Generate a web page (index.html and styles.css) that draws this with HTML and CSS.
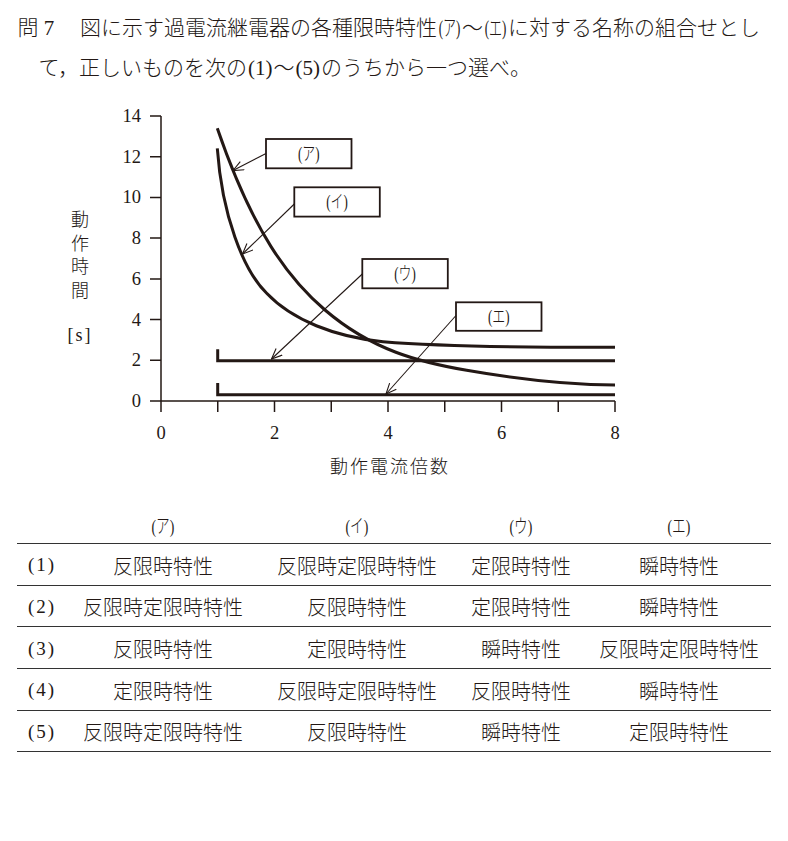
FILE: index.html
```html
<!DOCTYPE html>
<html lang="ja">
<head>
<meta charset="utf-8">
<title>問7</title>
<link rel="stylesheet" href="styles.css">
</head>
<body>
<div class="question">
  <div class="qline"><span class="qno">問 7</span>図に示す過電流継電器の各種限時特性<span class="pk"><span>(ア)</span></span>～<span class="pk"><span>(エ)</span></span>に対する名称の組合せとし</div>
  <div class="qline indent">て，正しいものを次の<span class="pn">(1)</span>～<span class="pn">(5)</span>のうちから一つ選べ。</div>
</div>

<svg class="chart" width="788" height="400" viewBox="0 100 788 400" xmlns="http://www.w3.org/2000/svg">
  <defs>
    <marker id="ah" markerWidth="12" markerHeight="11" refX="11" refY="5" orient="auto" markerUnits="userSpaceOnUse">
      <path d="M0.5,0.5 L11,5 L0.5,9.5" class="ahead"/>
    </marker>
  </defs>

  <path class="axis" d="M161,116 V412 M150,401 H615
    M150,116 H161 M150,156.7 H161 M150,197.4 H161 M150,238.1 H161 M150,278.9 H161 M150,319.6 H161 M150,360.3 H161
    M217.75,401 V412 M274.5,401 V412 M331.25,401 V412 M388,401 V412 M444.75,401 V412 M501.5,401 V412 M558.25,401 V412 M615,401 V412"/>

  <g class="tick">
    <text x="141" y="116">14</text>
    <text x="141" y="156.7">12</text>
    <text x="141" y="197.4">10</text>
    <text x="141" y="238.1">8</text>
    <text x="141" y="278.9">6</text>
    <text x="141" y="319.6">4</text>
    <text x="141" y="360.3">2</text>
    <text x="141" y="401">0</text>
  </g>
  <g class="xtick">
    <text x="161" y="433">0</text>
    <text x="274.5" y="433">2</text>
    <text x="388" y="433">4</text>
    <text x="501.5" y="433">6</text>
    <text x="615" y="433">8</text>
  </g>

  <g class="ytitle">
    <text x="80" y="220">動</text>
    <text x="80" y="243.5">作</text>
    <text x="80" y="267">時</text>
    <text x="80" y="290.5">間</text>
    <text x="80" y="335" class="unit">[s]</text>
  </g>
  <text class="xtitle" x="390" y="467">動作電流倍数</text>

  <path class="curve" d="M217.3,128.3 C253,232.4 289,279.2 325,310 C372.2,350.4 419.5,362.1 466.7,370.3 C515.5,378.8 565,385 615,385"/>
  <path class="curve" d="M217.3,148.3 C222,215 243,270 266.7,293.3 C292,320 335,337 383,341.7 C430,345.5 520,347.5 615,347.3"/>
  <path class="curve" d="M217.7,349.3 V360.7 H615"/>
  <path class="curve" d="M217.7,383 V394.7 H615"/>

  <line class="arrow" x1="266" y1="153.5" x2="233" y2="170.5" marker-end="url(#ah)"/>
  <line class="arrow" x1="294.3" y1="204" x2="242.5" y2="254" marker-end="url(#ah)"/>
  <line class="arrow" x1="362.3" y1="274" x2="271.5" y2="359" marker-end="url(#ah)"/>
  <line class="arrow" x1="456" y1="315.5" x2="386" y2="394" marker-end="url(#ah)"/>

  <rect class="box" x="266" y="139" width="85.5" height="29.3"/>
  <rect class="box" x="294.3" y="187.3" width="85.5" height="29.3"/>
  <rect class="box" x="362.3" y="259" width="85.5" height="29.3"/>
  <rect class="box" x="456" y="302.3" width="85.5" height="28.5"/>

  <g class="blabel">
    <text transform="translate(308.8 153.7) scale(0.72 1)">(ア)</text>
    <text transform="translate(337 202) scale(0.72 1)">(イ)</text>
    <text transform="translate(405 273.7) scale(0.72 1)">(ウ)</text>
    <text transform="translate(498.8 316.6) scale(0.72 1)">(エ)</text>
  </g>
</svg>

<div class="table">
  <div class="row head">
    <div></div>
    <div class="hk"><span>(ア)</span></div>
    <div class="hk"><span>(イ)</span></div>
    <div class="hk"><span>(ウ)</span></div>
    <div class="hk"><span>(エ)</span></div>
  </div>
  <div class="row">
    <div class="lab">(1)</div>
    <div>反限時特性</div>
    <div>反限時定限時特性</div>
    <div>定限時特性</div>
    <div>瞬時特性</div>
  </div>
  <div class="row">
    <div class="lab">(2)</div>
    <div>反限時定限時特性</div>
    <div>反限時特性</div>
    <div>定限時特性</div>
    <div>瞬時特性</div>
  </div>
  <div class="row">
    <div class="lab">(3)</div>
    <div>反限時特性</div>
    <div>定限時特性</div>
    <div>瞬時特性</div>
    <div>反限時定限時特性</div>
  </div>
  <div class="row">
    <div class="lab">(4)</div>
    <div>定限時特性</div>
    <div>反限時定限時特性</div>
    <div>反限時特性</div>
    <div>瞬時特性</div>
  </div>
  <div class="row">
    <div class="lab">(5)</div>
    <div>反限時定限時特性</div>
    <div>反限時特性</div>
    <div>瞬時特性</div>
    <div>定限時特性</div>
  </div>
</div>
</body>
</html>
```

FILE: styles.css
```css
* {
  box-sizing: border-box;
}

body {
  margin: 0;
  background: #ffffff;
  color: #231815;
  font-family: "Liberation Serif", "Noto Sans CJK JP", serif;
  font-weight: 300;
}

.question {
  height: 100px;
  padding: 8px 0 12px 17.5px;
  font-size: 21px;
  line-height: 40px;
  white-space: nowrap;
}

.qno {
  display: inline-block;
  width: 62.5px;
}

.indent {
  padding-left: 21px;
}

.pk {
  display: inline-flex;
  justify-content: center;
  width: 25px;
  vertical-align: top;
}

.pk > span {
  flex-shrink: 0;
  display: inline-block;
  transform: scaleX(0.62);
}

.pn {
  margin: 0 1px;
}

.chart {
  display: block;
}

.axis {
  fill: none;
  stroke: #231815;
  stroke-width: 1.5;
}

.curve {
  fill: none;
  stroke: #231815;
  stroke-width: 3;
  stroke-linejoin: miter;
}

.arrow {
  stroke: #231815;
  stroke-width: 1.1;
}

.ahead {
  fill: none;
  stroke: #231815;
  stroke-width: 1.1;
}

.box {
  fill: #ffffff;
  stroke: #231815;
  stroke-width: 1.8;
}

.tick text,
.xtick text,
.ytitle text,
.xtitle,
.blabel text {
  fill: #231815;
  dominant-baseline: central;
}

.tick text {
  font-size: 18.5px;
  text-anchor: end;
}

.xtick text {
  font-size: 18.5px;
  text-anchor: middle;
}

.ytitle text {
  font-size: 18px;
  text-anchor: middle;
}

.ytitle .unit {
  letter-spacing: 2px;
}

.xtitle {
  font-size: 18px;
  letter-spacing: 2px;
  text-anchor: middle;
}

.blabel text {
  font-size: 18px;
  text-anchor: middle;
}

.table {
  margin-left: 17px;
  width: 754px;
  font-size: 20px;
}

.row {
  display: grid;
  grid-template-columns: 50px 192px 196px 132px 184px;
  align-items: center;
  text-align: center;
  height: 41.67px;
  padding-top: 2px;
  border-bottom: 1.6px solid #333333;
  white-space: nowrap;
}

.row.head {
  height: 44px;
  padding-top: 6px;
  font-size: 19px;
}

.hk {
  display: flex;
  justify-content: center;
}

.hk > span {
  display: inline-block;
  transform: scaleX(0.72);
}

.lab {
  font-size: 19px;
  letter-spacing: 2px;
}
```
